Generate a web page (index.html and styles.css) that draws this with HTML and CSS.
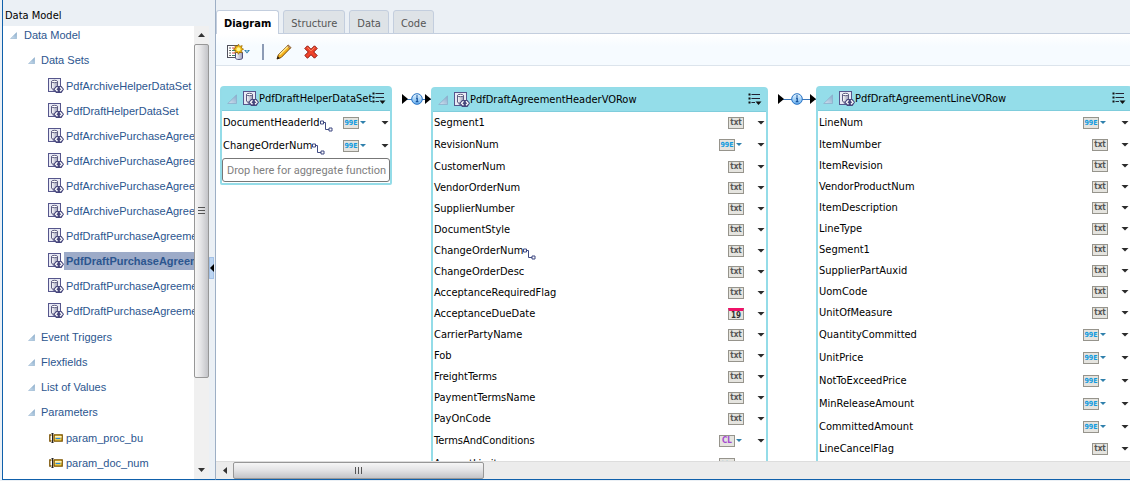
FILE: index.html
```html
<!DOCTYPE html>
<html lang="en">
<head>
<meta charset="utf-8">
<title>Data Model</title>
<link rel="stylesheet" href="styles.css">
</head>
<body>
<svg class="defs" aria-hidden="true">
  <defs>
    <linearGradient id="g-tri" x1="0" y1="1" x2="1" y2="0"><stop offset="0" stop-color="#d4e4f2"/><stop offset="1" stop-color="#86a9c9"/></linearGradient>
    <linearGradient id="g-cyl" x1="0" x2="1"><stop offset="0" stop-color="#ffffff"/><stop offset="1" stop-color="#9c9eb8"/></linearGradient>
    <linearGradient id="g-info" x1="0" y1="0" x2="0" y2="1"><stop offset="0" stop-color="#e8f6ff"/><stop offset="1" stop-color="#68b0f0"/></linearGradient>
  </defs>
  <symbol id="tri" viewBox="0 0 10 10"><path d="M9.5 .8v8.7H.8z" fill="url(#g-tri)" stroke="#8caecb" stroke-width=".8"/></symbol>
  <symbol id="dataset" viewBox="0 0 16 16">
    <rect x=".5" y=".5" width="12" height="13" fill="#e9eaf5" stroke="#56568c"/>
    <path d="M4 10h7v3H5z" fill="#8586a8"/>
    <path d="M3.500 3.500v6.500c0 1.500 6 1.500 6 0V3.500z" fill="url(#g-cyl)" stroke="#5c5c80"/>
    <ellipse cx="6.500" cy="3.500" rx="3" ry="1.200" fill="#fff" stroke="#5c5c80"/>
    <path d="M8 8h5.500L16 11.200 13.500 15H8l-2.500-3.800z" fill="#46467c"/>
    <path d="M9.500 9.300 7.500 11.300l2 2M12 9.300l2 2-2 2" fill="none" stroke="#fff" stroke-width="1.300"/>
  </symbol>
  <symbol id="param" viewBox="0 0 14 10">
    <path d="M2.500 2H.8v6h1.700" fill="none" stroke="#7b5200" stroke-width="1.300"/>
    <path d="M5 1.800h8.200v6.400H5z" fill="#ffd84a" stroke="#7b5200" stroke-width="1.300"/>
    <path d="M6 3h6.600v1.500H6z" fill="#fff3c4"/><path d="M6.500 5.500h5" stroke="#2486d8" stroke-width="1.300"/>
    <path d="M2.500.5h2M2.500 9.500h2M3.500.5v9" fill="none" stroke="#222" stroke-width="1"/>
  </symbol>
  <symbol id="new" viewBox="0 0 17 16">
    <rect x=".5" y="1.500" width="11" height="12" fill="#fff" stroke="#50505c"/>
    <path d="M2.300 4h1.500M2.300 6.500h1.500M2.300 9h1.500M2.300 11.500h1.500" stroke="#333"/>
    <path d="M5 4h4M5 9h3" stroke="#d84a4a"/><path d="M5 6.500h4M5 11.500h3" stroke="#3c8060"/>
    <path d="M8.500 8.500v5.500c0 2 7 2 7 0V8.500z" fill="url(#g-cyl)" stroke="#50507c"/>
    <path d="m11.500.2 1.200 2.200 2.500-.8-.8 2.400 2.200 1.200-2.200 1.200.8 2.500-2.500-.8-1.200 2.200-1.200-2.200-2.500.8.8-2.500L6.400 5.200l2.200-1.200-.8-2.400 2.500.8z" fill="#f2ba10" stroke="#9a6500" stroke-width=".7"/>
    <circle cx="11.500" cy="5.200" r="2" fill="#fff78c"/>
  </symbol>
  <symbol id="pencil" viewBox="0 0 16 16">
    <path d="m1 15 1.400-4.300L12.200 1.200l2.600 2.500L5.200 13.500z" fill="#f5b21b" stroke="#7a4a0a"/>
    <path d="m3.500 10.800 8.700-8.500" stroke="#ffe993" stroke-width="1.300"/>
    <path d="m.8 15.200 1-3 2 2z" fill="#221b10"/><path d="m11.400 2 2.600 2.600 1-1L12.300 1z" fill="#c9a27b" stroke="#80532c" stroke-width=".6"/>
  </symbol>
  <symbol id="delete" viewBox="0 0 14 14"><path d="m3.500.8 3.500 3.500 3.500-3.500 2.700 2.700L9.700 7l3.500 3.500-2.700 2.700L7 9.700l-3.500 3.500-2.700-2.700L4.300 7 .8 3.500z" fill="#f0432b" stroke="#8d170e"/><path d="m3.500 2.400 3.500 3.500 3.500-3.500" fill="none" stroke="#ff9a72" stroke-width=".9"/></symbol>
  <symbol id="menu" viewBox="0 0 14 13"><path d="M.5 1.500h2M.5 5.500h2M.5 9.500h2" stroke="#111" stroke-width="2"/><path d="M3.500 1.500H12M3.500 5.500H12M3.500 9.500H7" stroke="#223" stroke-width="1.200"/><path d="M7.500 8.500h6L10.500 12z" fill="#111"/></symbol>
  <symbol id="down-blue" viewBox="0 0 6 4"><path d="M0 0h6L3 3.500z" fill="#2f80ac"/><path d="M2 1h2" stroke="#d8f0fc"/></symbol>
  <symbol id="link" viewBox="0 0 13 12"><path d="M3.500 2.500h2v7H9" fill="none" stroke="#414b82"/><path d="M.5 1h3v3h-3zM9 8h3v3H9z" fill="#fff" stroke="#3d4780"/></symbol>
  <symbol id="info" viewBox="0 0 12 12"><circle cx="6" cy="6" r="5.300" fill="url(#g-info)" stroke="#2571c4"/><path d="M6 2.300v1.500M5 5.200h1.200v3.300M4.800 8.700h2.600" fill="none" stroke="#14529c" stroke-width="1.300"/></symbol>
  <symbol id="head" viewBox="0 0 6 10"><path d="M0 0v10l6-5z" fill="#000"/></symbol>
</svg>
<div class="app">
  <aside class="side">
    <h1 class="side-title">Data Model</h1>
    <div class="side-body">
      <nav class="tree" aria-label="Data Model">
        <div class="node root"><svg class="tri"><use href="#tri"/></svg><a href="#">Data Model</a></div>
        <div class="node group"><svg class="tri"><use href="#tri"/></svg><a href="#">Data Sets</a></div>
        <div class="leaves">
          <div class="node leaf"><svg class="ds"><use href="#dataset"/></svg><a href="#">PdfArchiveHelperDataSet</a></div>
          <div class="node leaf"><svg class="ds"><use href="#dataset"/></svg><a href="#">PdfDraftHelperDataSet</a></div>
          <div class="node leaf"><svg class="ds"><use href="#dataset"/></svg><a href="#">PdfArchivePurchaseAgreement</a></div>
          <div class="node leaf"><svg class="ds"><use href="#dataset"/></svg><a href="#">PdfArchivePurchaseAgreement</a></div>
          <div class="node leaf"><svg class="ds"><use href="#dataset"/></svg><a href="#">PdfArchivePurchaseAgreement</a></div>
          <div class="node leaf"><svg class="ds"><use href="#dataset"/></svg><a href="#">PdfArchivePurchaseAgreement</a></div>
          <div class="node leaf"><svg class="ds"><use href="#dataset"/></svg><a href="#">PdfDraftPurchaseAgreement</a></div>
          <div class="node leaf"><svg class="ds"><use href="#dataset"/></svg><a href="#" class="selected" aria-current="true">PdfDraftPurchaseAgreement</a></div>
          <div class="node leaf"><svg class="ds"><use href="#dataset"/></svg><a href="#">PdfDraftPurchaseAgreement</a></div>
          <div class="node leaf"><svg class="ds"><use href="#dataset"/></svg><a href="#">PdfDraftPurchaseAgreement</a></div>
        </div>
        <div class="node group"><svg class="tri"><use href="#tri"/></svg><a href="#">Event Triggers</a></div>
        <div class="node group"><svg class="tri"><use href="#tri"/></svg><a href="#">Flexfields</a></div>
        <div class="node group"><svg class="tri"><use href="#tri"/></svg><a href="#">List of Values</a></div>
        <div class="node group"><svg class="tri"><use href="#tri"/></svg><a href="#">Parameters</a></div>
        <div class="node leaf"><svg class="pm"><use href="#param"/></svg><a href="#">param_proc_bu</a></div>
        <div class="node leaf"><svg class="pm"><use href="#param"/></svg><a href="#">param_doc_num</a></div>
      </nav>
      <div class="vbar">
        <button class="bar-btn" aria-label="Scroll up"><svg class="arrow-v"><path d="M0 4h7L3.500 0z"/></svg></button>
        <div class="vtrack"><div class="vthumb"><svg class="grip"><path d="M0 .5h7M0 3.500h7M0 6.500h7"/></svg></div></div>
        <button class="bar-btn" aria-label="Scroll down"><svg class="arrow-v"><path d="M0 0h7L3.500 4z"/></svg></button>
      </div>
    </div>
  </aside>
  <div class="splitter"><button class="collapse" aria-label="Collapse panel"><svg class="arrow-c"><path d="M4 0v8L0 4z"/></svg></button></div>
  <main class="main">
    <div class="tabs" role="tablist">
      <button class="tab active" role="tab" aria-selected="true">Diagram</button>
      <button class="tab" role="tab">Structure</button>
      <button class="tab" role="tab">Data</button>
      <button class="tab" role="tab">Code</button>
    </div>
    <div class="toolbar">
      <button class="tool new" aria-label="New data set"><svg class="i-new"><use href="#new"/></svg><svg class="blue"><use href="#down-blue"/></svg></button>
      <span class="sep"></span>
      <button class="tool" aria-label="Edit"><svg class="i-edit"><use href="#pencil"/></svg></button>
      <button class="tool" aria-label="Delete"><svg class="i-del"><use href="#delete"/></svg></button>
    </div>
    <div class="canvas">
      <section class="card helper">
        <header class="head"><svg class="tri"><use href="#tri"/></svg><svg class="ds"><use href="#dataset"/></svg><h2>PdfDraftHelperDataSet</h2><button class="menu" aria-label="Menu"><svg class="i-menu"><use href="#menu"/></svg></button></header>
        <ul class="fields">
          <li class="tall">DocumentHeaderId<svg class="lk"><use href="#link"/></svg><button class="type num">99E</button><button class="more" aria-label="Options"></button></li>
          <li class="tall">ChangeOrderNum<svg class="lk"><use href="#link"/></svg><button class="type num">99E</button><button class="more" aria-label="Options"></button></li>
        </ul>
        <div class="drop">Drop here for aggregate function</div>
      </section>
      <div class="connector short"><svg class="hd"><use href="#head"/></svg><svg class="inf"><use href="#info"/></svg><svg class="hd"><use href="#head"/></svg></div>
      <section class="card header-row">
        <header class="head"><svg class="tri"><use href="#tri"/></svg><svg class="ds"><use href="#dataset"/></svg><h2>PdfDraftAgreementHeaderVORow</h2><button class="menu" aria-label="Menu"><svg class="i-menu"><use href="#menu"/></svg></button></header>
        <ul class="fields">
          <li>Segment1<button class="type">txt</button><button class="more" aria-label="Options"></button></li>
          <li class="tall">RevisionNum<button class="type num">99E</button><button class="more" aria-label="Options"></button></li>
          <li>CustomerNum<button class="type">txt</button><button class="more" aria-label="Options"></button></li>
          <li>VendorOrderNum<button class="type">txt</button><button class="more" aria-label="Options"></button></li>
          <li>SupplierNumber<button class="type">txt</button><button class="more" aria-label="Options"></button></li>
          <li>DocumentStyle<button class="type">txt</button><button class="more" aria-label="Options"></button></li>
          <li>ChangeOrderNum<svg class="lk"><use href="#link"/></svg><button class="type">txt</button><button class="more" aria-label="Options"></button></li>
          <li>ChangeOrderDesc<button class="type">txt</button><button class="more" aria-label="Options"></button></li>
          <li>AcceptanceRequiredFlag<button class="type">txt</button><button class="more" aria-label="Options"></button></li>
          <li>AcceptanceDueDate<button class="type date">19</button><button class="more" aria-label="Options"></button></li>
          <li>CarrierPartyName<button class="type">txt</button><button class="more" aria-label="Options"></button></li>
          <li>Fob<button class="type">txt</button><button class="more" aria-label="Options"></button></li>
          <li>FreightTerms<button class="type">txt</button><button class="more" aria-label="Options"></button></li>
          <li>PaymentTermsName<button class="type">txt</button><button class="more" aria-label="Options"></button></li>
          <li>PayOnCode<button class="type">txt</button><button class="more" aria-label="Options"></button></li>
          <li class="tall">TermsAndConditions<button class="type clob">CL</button><button class="more" aria-label="Options"></button></li>
          <li class="tall">AmountLimit<button class="type num">99E</button><button class="more" aria-label="Options"></button></li>
        </ul>
      </section>
      <div class="connector long"><svg class="hd"><use href="#head"/></svg><svg class="inf"><use href="#info"/></svg><svg class="hd"><use href="#head"/></svg></div>
      <section class="card line-row">
        <header class="head"><svg class="tri"><use href="#tri"/></svg><svg class="ds"><use href="#dataset"/></svg><h2>PdfDraftAgreementLineVORow</h2><button class="menu" aria-label="Menu"><svg class="i-menu"><use href="#menu"/></svg></button></header>
        <ul class="fields">
          <li class="tall">LineNum<button class="type num">99E</button><button class="more" aria-label="Options"></button></li>
          <li>ItemNumber<button class="type">txt</button><button class="more" aria-label="Options"></button></li>
          <li>ItemRevision<button class="type">txt</button><button class="more" aria-label="Options"></button></li>
          <li>VendorProductNum<button class="type">txt</button><button class="more" aria-label="Options"></button></li>
          <li>ItemDescription<button class="type">txt</button><button class="more" aria-label="Options"></button></li>
          <li>LineType<button class="type">txt</button><button class="more" aria-label="Options"></button></li>
          <li>Segment1<button class="type">txt</button><button class="more" aria-label="Options"></button></li>
          <li>SupplierPartAuxid<button class="type">txt</button><button class="more" aria-label="Options"></button></li>
          <li>UomCode<button class="type">txt</button><button class="more" aria-label="Options"></button></li>
          <li>UnitOfMeasure<button class="type">txt</button><button class="more" aria-label="Options"></button></li>
          <li class="tall">QuantityCommitted<button class="type num">99E</button><button class="more" aria-label="Options"></button></li>
          <li class="tall">UnitPrice<button class="type num">99E</button><button class="more" aria-label="Options"></button></li>
          <li class="tall">NotToExceedPrice<button class="type num">99E</button><button class="more" aria-label="Options"></button></li>
          <li class="tall">MinReleaseAmount<button class="type num">99E</button><button class="more" aria-label="Options"></button></li>
          <li class="tall">CommittedAmount<button class="type num">99E</button><button class="more" aria-label="Options"></button></li>
          <li>LineCancelFlag<button class="type">txt</button><button class="more" aria-label="Options"></button></li>
          <li></li>
        </ul>
      </section>
    </div>
    <div class="hbar">
      <button class="bar-btn" aria-label="Scroll left"><svg class="arrow-h"><path d="M4 0v7L0 3.500z"/></svg></button>
      <div class="hthumb"><svg class="grip"><path d="M.5 0v7M3.500 0v7M6.500 0v7"/></svg></div>
    </div>
  </main>
</div>
</body>
</html>
```

FILE: styles.css
```css
* { box-sizing: border-box; }
body { margin: 0; background: #fff; color: #000; font: 11px/13px "DejaVu Sans Condensed", Tahoma, sans-serif; }
button { margin: 0; padding: 0; border: 0; background: none; color: inherit; font: inherit; }
svg { display: block; flex: none; overflow: visible; }
h1, h2, ul { margin: 0; padding: 0; font: inherit; }
.defs { position: absolute; width: 0; height: 0; }

.app { display: flex; height: 100vh; padding: 0 0 1px 2px; overflow: hidden; background: #ebf0f5; }
.side { display: flex; flex-direction: column; flex: 0 0 207px; min-width: 0; border-left: 1px solid #0f60ab; border-bottom: 1px solid #0f60ab; }
.side-title { height: 26px; padding: 9px 0 0 2px; }
.side-body { display: flex; flex: 1; min-height: 0; background: #fff; }
.tree { flex: 1; min-width: 0; overflow: hidden; margin-top: -3px; font: 11px/13px "Liberation Sans", Arial, sans-serif; }
.tree a { color: #2c568f; text-decoration: none; white-space: nowrap; }
.node { display: flex; align-items: center; height: 25px; }
.root { padding-left: 7px; gap: 7px; }
.group { padding-left: 25px; gap: 6px; }
.leaf { padding-left: 45px; }
.leaves { padding: 0 0 2px; }
.leaf a { flex: 1; padding: 3px 0 2px 2px; overflow: hidden; }
.leaf .selected { background: #9dabc8; font-weight: bold; }
.tri { width: 7px; height: 7px; }
.ds { width: 16px; height: 16px; }
.pm { width: 14px; height: 10px; margin: 0 1px; }

.vbar { display: flex; flex-direction: column; flex: 0 0 15px; background: #f0f0f0; }
.vbar .bar-btn { height: 18px; }
.bar-btn { display: grid; place-items: center; }
.arrow-v { width: 7px; height: 4px; }
.arrow-h { width: 4px; height: 7px; }
.arrow-c { width: 4px; height: 8px; }
.bar-btn svg { fill: #333; }
.vtrack { flex: 1; }
.vthumb { display: grid; place-items: center; height: 80%; border: 1px solid #979797; border-radius: 2px; background: linear-gradient(90deg, #f6f6f6, #e4e4e6 45%, #c3c4c8); }
.grip { width: 7px; height: 7px; stroke: #555; fill: none; }

.splitter { display: flex; align-items: center; flex: 0 0 6px; padding-top: 56px; border-bottom: 1px solid #0f60ab; }
.collapse { display: grid; place-items: center; width: 5px; height: 22px; border: 1px solid #a3c1e6; background: #bcd5f2; }
.collapse .arrow-c { fill: #000; }

.main { display: flex; flex-direction: column; flex: 1; min-width: 0; border-left: 1px solid #9dafc5; border-bottom: 1px solid #0f60ab; background: #fff; }
.tabs { display: flex; align-items: flex-end; gap: 4px; flex: 0 0 34px; background: #ebf0f5; box-shadow: inset 0 -1px #c3cede; }
.tab { height: 24px; padding: 2px 7px 0; border: 1px solid #c3cede; border-radius: 3px 3px 0 0; background: #dee3e7; color: #555; }
.tab.active { height: 24px; padding: 1px 7px 0; border-bottom: 0; background: #fff; color: #000; font-weight: bold; }
.toolbar { display: flex; align-items: center; flex: 0 0 32px; padding: 4px 0 0 11px; background: linear-gradient(#fff, #f6fbff 40%); border-bottom: 1px solid #dce4ec; }
.tool.new { display: flex; align-items: center; }
.i-new { width: 17px; height: 16px; }
.blue { width: 6px; height: 4px; }
.sep { width: 2px; height: 16px; margin: 0 12px; background: #8c9bb5; }
.i-edit { width: 16px; height: 16px; }
.i-del { width: 14px; height: 14px; margin-left: 12px; }

.canvas { display: flex; align-items: flex-start; flex: 1; min-height: 0; overflow: hidden; padding: 20px 0 0 4px; }
.card { flex: none; border: 2px solid #94dce8; border-top-width: 1px; border-radius: 4px 4px 2px 2px; }
.helper { width: 172px; }
.header-row { width: 337px; margin-top: 1px; }
.line-row { width: 316px; }
.head { display: flex; align-items: center; height: 24px; padding: 0 4px 0 5px; background: #94dde9; border-bottom: 1px solid #7fcddc; }
.head .tri { width: 10px; height: 10px; margin-right: 6px; }
.menu { margin-left: auto; }
.i-menu { width: 14px; height: 13px; }
.fields { list-style: none; }
.fields li { display: flex; align-items: center; height: 21px; padding: 0 1px; }
.fields .tall { height: 23px; }
.lk { width: 13px; height: 12px; margin-top: 6px; }
.type { display: flex; justify-content: center; width: 16px; height: 12px; margin-left: auto; margin-right: 13px; border: 1px solid #96948c; background: #e5e4df; color: #555; font: bold 8px/10px "DejaVu Sans Condensed", sans-serif; }
.num, .clob { position: relative; margin-right: 22px; color: #109be0; }
.num { font-size: 7px; }
.clob { color: #a349d0; }
.num::after, .clob::after { content: ""; position: absolute; left: 16px; top: 3px; border: 3px solid transparent; border-top-color: #2f80ac; border-bottom: 0; }
.date { border-top: 3px solid #f01068; color: #333; line-height: 9px; }
.more { width: 8px; height: 4px; background: #2b2b2b; clip-path: polygon(0 0, 100% 0, 50% 100%); }
.drop { height: 24px; margin: 1px 0; padding: 5px 4px; border: 1px solid #777; border-radius: 3px; color: #808080; font-family: Roboto, sans-serif; white-space: nowrap; }

.connector { display: flex; align-items: center; justify-content: space-between; flex: none; height: 26px; background: linear-gradient(#3a76b8, #3a76b8) center / 100% 1px no-repeat; }
.short { width: 29px; margin-left: 10px; }
.long { width: 38px; margin-left: 10px; }
.hd { width: 6px; height: 10px; }
.inf { width: 12px; height: 12px; }

.hbar { display: flex; flex: 0 0 18px; background: #ececec; border-top: 1px solid #ddd; }
.hbar .bar-btn { width: 17px; }
.hthumb { display: grid; place-items: center; width: 251px; border: 1px solid #979797; border-radius: 2px; background: linear-gradient(#f6f6f6, #e4e4e6 45%, #c3c4c8); }
```
